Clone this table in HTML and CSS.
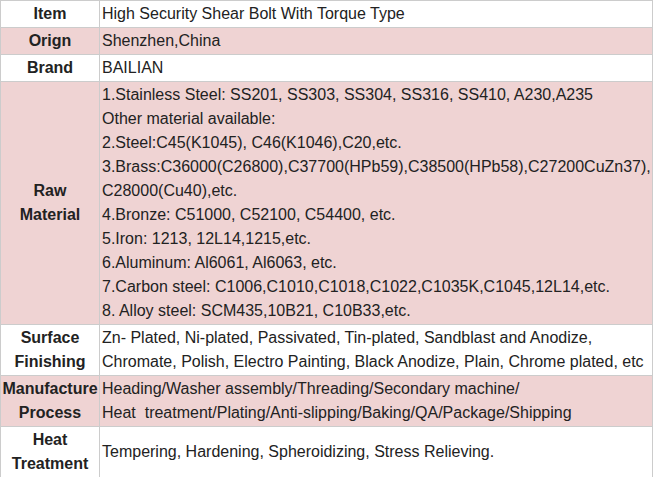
FILE: index.html
```html
<!DOCTYPE html>
<html>
<head>
<meta charset="utf-8">
<link rel="stylesheet" href="styles.css">
</head>
<body>
<table class="spec">
  <colgroup><col class="c-label"><col class="c-value"></colgroup>
  <tr class="white"><th>Item</th><td>High Security Shear Bolt With Torque Type</td></tr>
  <tr class="pink"><th>Orign</th><td>Shenzhen,China</td></tr>
  <tr class="white"><th>Brand</th><td>BAILIAN</td></tr>
  <tr class="pink"><th>Raw<br>Material</th><td>1.Stainless Steel: SS201, SS303, SS304, SS316, SS410, A230,A235<br>Other material available:<br>2.Steel:C45(K1045), C46(K1046),C20,etc.<br>3.Brass:C36000(C26800),C37700(HPb59),C38500(HPb58),C27200CuZn37),<br>C28000(Cu40),etc.<br>4.Bronze: C51000, C52100, C54400, etc.<br>5.Iron: 1213, 12L14,1215,etc.<br>6.Aluminum: Al6061, Al6063, etc.<br>7.Carbon steel: C1006,C1010,C1018,C1022,C1035K,C1045,12L14,etc.<br>8. Alloy steel: SCM435,10B21, C10B33,etc.</td></tr>
  <tr class="white"><th>Surface<br>Finishing</th><td>Zn- Plated, Ni-plated, Passivated, Tin-plated, Sandblast and Anodize,<br>Chromate, Polish, Electro Painting, Black Anodize, Plain, Chrome plated, etc</td></tr>
  <tr class="pink"><th>Manufacture<br>Process</th><td>Heading/Washer assembly/Threading/Secondary machine/<br>Heat&nbsp; treatment/Plating/Anti-slipping/Baking/QA/Package/Shipping</td></tr>
  <tr class="white"><th>Heat<br>Treatment</th><td>Tempering, Hardening, Spheroidizing, Stress Relieving.</td></tr>
</table>
</body>
</html>
```
FILE: styles.css
```css
html, body {
  margin: 0;
  padding: 0;
  background: #ffffff;
}
body {
  font-family: "Liberation Sans", Arial, sans-serif;
  font-size: 16px;
  color: #222222;
}
.spec {
  border-collapse: collapse;
  width: 653px;
  table-layout: fixed;
}
.c-label { width: 99px; }
.spec th, .spec td {
  border: 1px solid #cccccc;
  padding: 1px 2px 1px 2px;
  line-height: 24px;
  vertical-align: middle;
}
.spec th {
  font-weight: bold;
  text-align: center;
  padding: 1px 0;
}
.spec td {
  text-align: left;
  white-space: nowrap;
}
.pink { background: #efd3d3; }
.white { background: #ffffff; }
```
